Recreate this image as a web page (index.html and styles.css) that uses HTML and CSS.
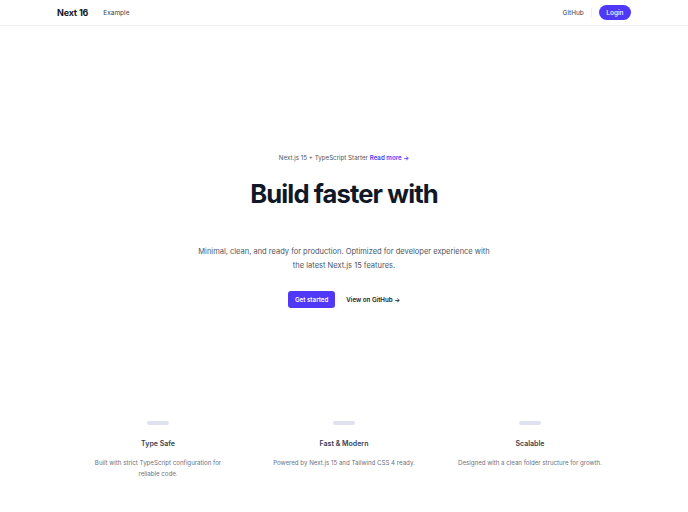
FILE: index.html
```html
<!DOCTYPE html>
<html lang="en">
<head>
<meta charset="utf-8">
<title>Next 16</title>
<link rel="stylesheet" href="styles.css">
</head>
<body>
<header class="header">
  <div class="header-inner">
    <div class="header-left">
      <span class="logo">Next 16</span>
      <a class="nav-link" href="#">Example</a>
    </div>
    <div class="header-right">
      <a class="nav-link" href="#">GitHub</a>
      <span class="divider"></span>
      <a class="login" href="#">Login</a>
    </div>
  </div>
</header>
<main>
  <section class="hero">
    <p class="eyebrow">Next.js 15 + TypeScript Starter <a class="read-more" href="#">Read more →</a></p>
    <h1 class="title">Build faster with</h1>
    <p class="lead">Minimal, clean, and ready for production. Optimized for developer experience with the latest Next.js 15 features.</p>
    <div class="actions">
      <a class="btn-primary" href="#">Get started</a>
      <a class="btn-link" href="#">View on GitHub →</a>
    </div>
  </section>
  <section class="features">
    <div class="feature">
      <span class="bar"></span>
      <h3 class="feature-title">Type Safe</h3>
      <p class="feature-text">Built with strict TypeScript configuration for reliable code.</p>
    </div>
    <div class="feature">
      <span class="bar"></span>
      <h3 class="feature-title">Fast &amp; Modern</h3>
      <p class="feature-text">Powered by Next.js 15 and Tailwind CSS 4 ready.</p>
    </div>
    <div class="feature">
      <span class="bar"></span>
      <h3 class="feature-title">Scalable</h3>
      <p class="feature-text">Designed with a clean folder structure for growth.</p>
    </div>
  </section>
</main>
</body>
</html>
```
FILE: styles.css
```css
* { box-sizing: border-box; }
html, body { margin: 0; padding: 0; }
body {
  font-family: Inter, "Noto Sans", "Liberation Sans", sans-serif;
  background: #ffffff;
  color: #101828;
  width: 688px;
  height: 512px;
  overflow: hidden;
}
a { text-decoration: none; color: inherit; }

.header {
  height: 26px;
  border-bottom: 1px solid #eceef2;
}
.header-inner {
  width: 574px;
  margin: 0 auto;
  height: 25px;
  display: flex;
  align-items: center;
  justify-content: space-between;
}
.header-left { display: flex; align-items: center; gap: 15px; }
.header-right { display: flex; align-items: center; gap: 7px; }
.logo {
  font-size: 9px;
  font-weight: 700;
  letter-spacing: -0.02em;
  color: #101828;
}
.nav-link {
  font-size: 6.5px;
  color: #364153;
}
.divider {
  width: 1px;
  height: 9px;
  background: #eceef2;
}
.login {
  font-size: 6.5px;
  font-weight: 500;
  color: #ffffff;
  background: #4f39f6;
  border-radius: 999px;
  height: 15px;
  padding: 0 7.5px;
  display: flex;
  align-items: center;
}

.hero {
  padding-top: 126px;
  text-align: center;
  display: flex;
  flex-direction: column;
  align-items: center;
}
.eyebrow {
  margin: 0;
  font-size: 6.2px;
  line-height: 12px;
  color: #4a5565;
}
.read-more {
  font-weight: 600;
  color: #4f39f6;
}
.title {
  margin: 15px 0 0;
  font-size: 25.6px;
  line-height: 30px;
  font-weight: 700;
  letter-spacing: -0.035em;
  color: #101828;
}
.lead {
  margin: 36px 0 0;
  width: 300px;
  font-size: 7.5px;
  line-height: 14px;
  color: #4a5565;
}
.actions {
  margin-top: 18px;
  display: flex;
  align-items: center;
  gap: 11px;
}
.btn-primary {
  background: #4f39f6;
  color: #fff;
  font-size: 6.2px;
  font-weight: 600;
  height: 17px;
  padding: 0 7px;
  border-radius: 3px;
  display: flex;
  align-items: center;
}
.btn-link {
  font-size: 6.2px;
  font-weight: 600;
  color: #101828;
}

.features {
  margin: 113px auto 0;
  width: 520px;
  display: grid;
  grid-template-columns: repeat(3, 148px);
  column-gap: 38px;
  text-align: center;
}
.feature {
  display: flex;
  flex-direction: column;
  align-items: center;
}
.bar {
  width: 22px;
  height: 4px;
  border-radius: 2px;
  background: #e0e1ef;
}
.feature-title {
  margin: 12.5px 0 0;
  font-size: 7px;
  line-height: 11px;
  font-weight: 600;
  color: #364153;
}
.feature-text {
  margin: 8px 0 0;
  font-size: 6.15px;
  line-height: 11px;
  color: #6a7282;
}
```
